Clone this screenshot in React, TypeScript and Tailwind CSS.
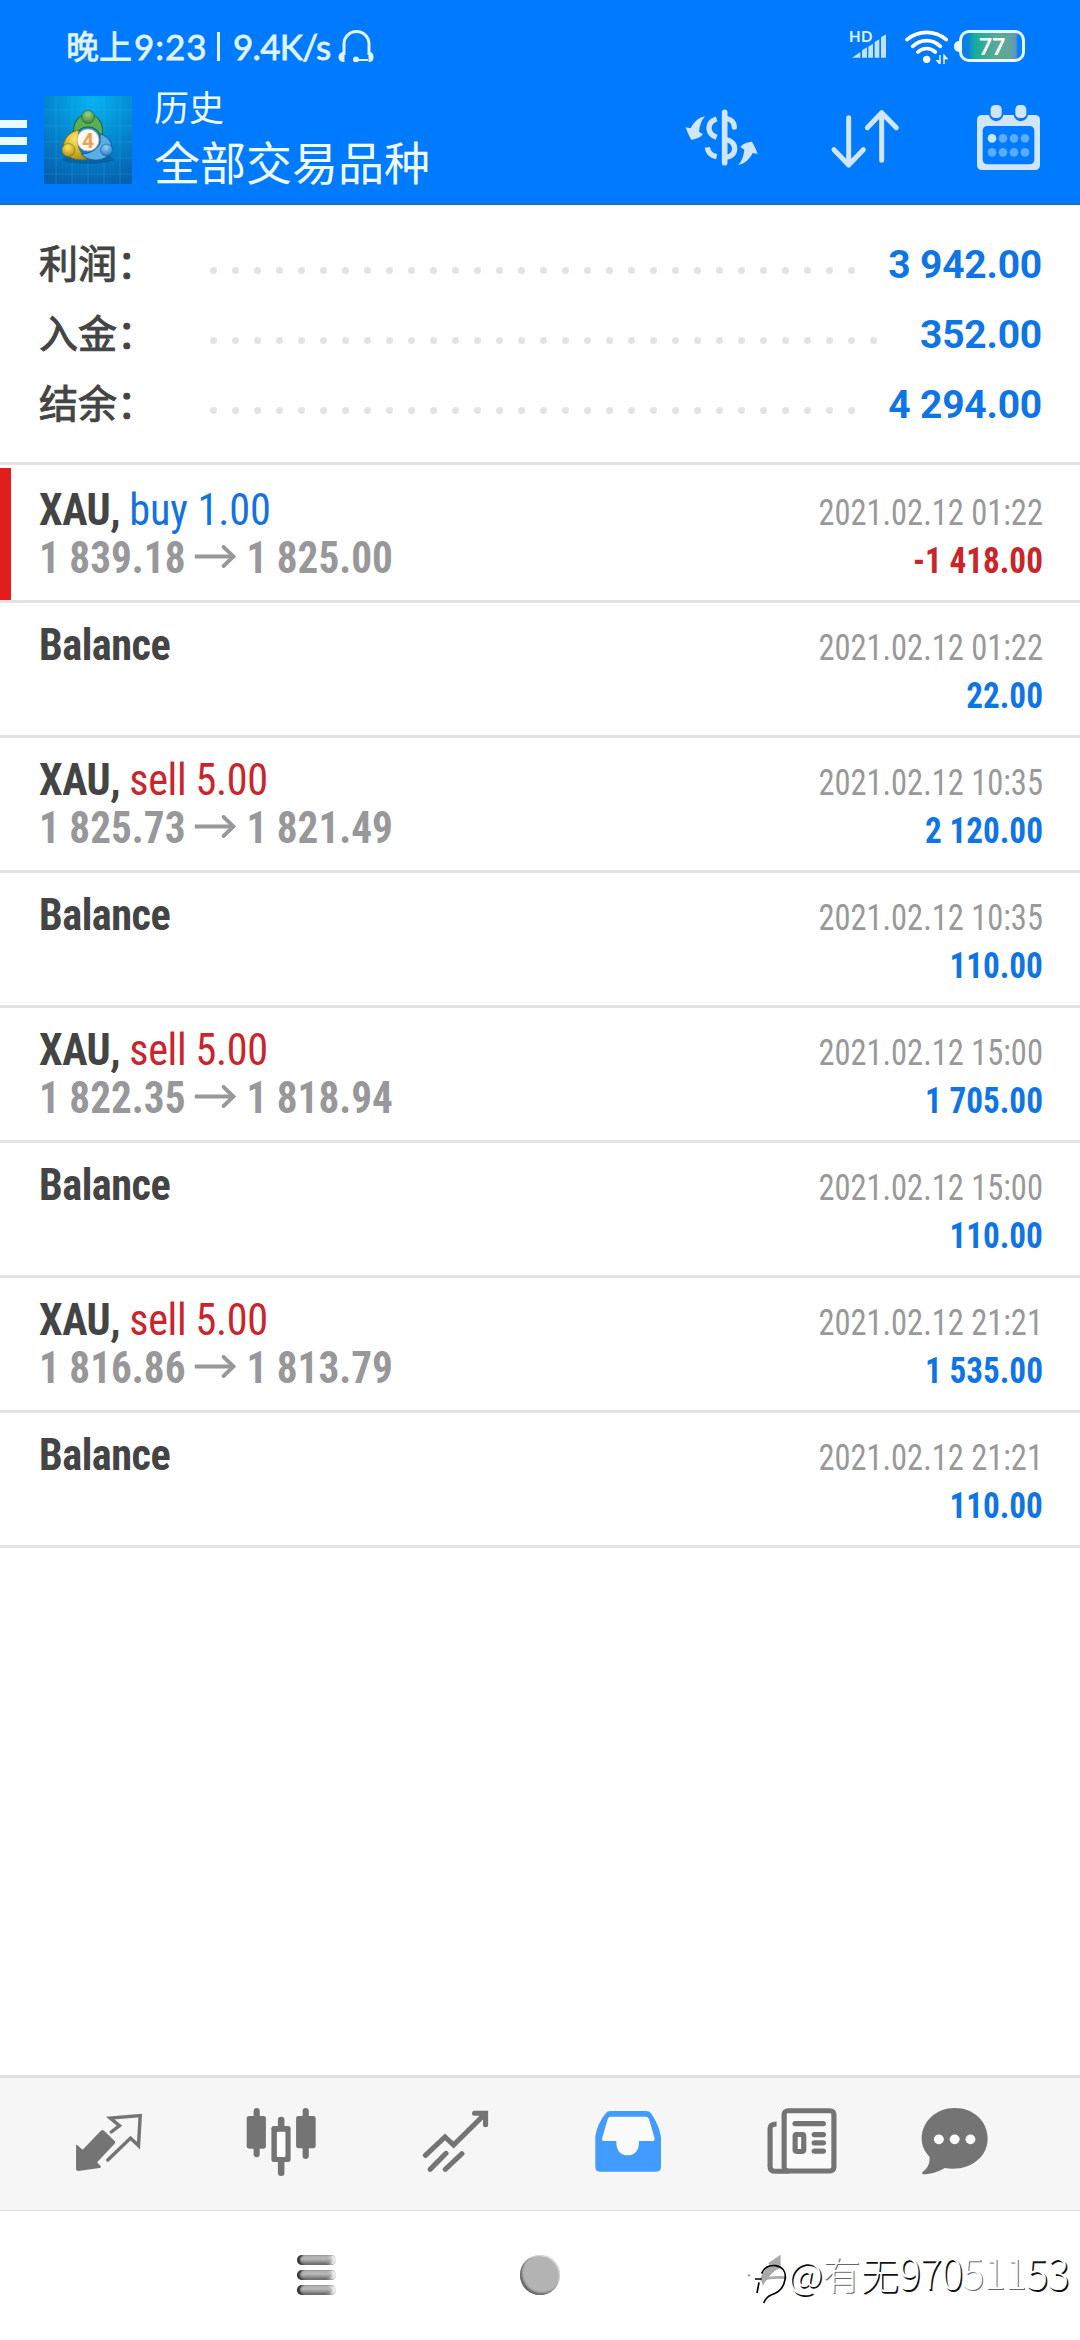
import type { ReactNode } from "react";

type Deal = {
  symbol: string;
  side?: "buy" | "sell";
  volume?: string;
  open?: string;
  close?: string;
  time: string;
  amount: string;
};

const summary = [
  { label: "利润", value: "3 942.00", dots: 30 },
  { label: "入金", value: "352.00", dots: 31 },
  { label: "结余", value: "4 294.00", dots: 30 },
];

const deals: Deal[] = [
  { symbol: "XAU", side: "buy", volume: "1.00", open: "1 839.18", close: "1 825.00", time: "2021.02.12 01:22", amount: "-1 418.00" },
  { symbol: "Balance", time: "2021.02.12 01:22", amount: "22.00" },
  { symbol: "XAU", side: "sell", volume: "5.00", open: "1 825.73", close: "1 821.49", time: "2021.02.12 10:35", amount: "2 120.00" },
  { symbol: "Balance", time: "2021.02.12 10:35", amount: "110.00" },
  { symbol: "XAU", side: "sell", volume: "5.00", open: "1 822.35", close: "1 818.94", time: "2021.02.12 15:00", amount: "1 705.00" },
  { symbol: "Balance", time: "2021.02.12 15:00", amount: "110.00" },
  { symbol: "XAU", side: "sell", volume: "5.00", open: "1 816.86", close: "1 813.79", time: "2021.02.12 21:21", amount: "1 535.00" },
  { symbol: "Balance", time: "2021.02.12 21:21", amount: "110.00" },
];

function StatusBar() {
  return (
    <div className="flex h-[90px] items-start justify-between pl-[66px] pr-[55px] pt-[30px] text-[#dff4ff]">
      <div className="flex h-8 items-center font-[Lato,'Noto_Sans_CJK_SC',sans-serif] text-[35px] leading-8 [-webkit-text-stroke:0.8px_#dff4ff]">
        <span className="w-[68px] text-[33px]">晚上</span>
        <span className="w-[83px] tracking-[1px]">9:23</span>
        <span className="h-[29px] w-[3px] bg-[#dff4ff]" />
        <span className="ml-[13px] w-[105px] tracking-[-0.7px]">9.4K/s</span>
        <svg className="h-8 w-[36px]" viewBox="0 0 36 32" fill="none" stroke="currentColor" strokeWidth="3">
          <path d="M6 25V14a12.500 12.500 0 0 1 25 0v11" />
          <path d="M18 30h12" strokeWidth="2" />
          <path d="M6.500 22v10c-4 0-6-2-6-5s2-5 6-5zM30.500 22v10c4 0 5-2 5-5s-1-5-5-5z" fill="currentColor" stroke="none" />
          <circle cx="18" cy="29.500" r="3" fill="currentColor" stroke="none" />
        </svg>
      </div>
      <div className="flex h-[34px] items-start">
        <div className="relative h-[34px] w-[56px]">
          <span className="absolute -top-px left-0 font-[Lato,sans-serif] text-[15px] font-bold leading-[15px] tracking-[0.5px]">HD</span>
          <svg className="h-[28px] w-[38px]" viewBox="0 0 114 84" fill="#bfe2ff">
            <path d="M9 83L34 66V83zM39 83V61l15-9v31zM58 83V50l14-9v42zM77 83V36l14-8v55zM96 83V22l15-9v70z" />
          </svg>
        </div>
        <svg className="h-[34px] w-[43px]" viewBox="792 88 129 102" fill="none" stroke="#fff" strokeWidth="11" strokeLinecap="round">
          <path d="M798 117C832 88 882 88 916 117M815 137C840 114 874 114 898 137M831 154C846 140 867 140 883 154" />
          <circle cx="857" cy="176" r="11" fill="#fff" stroke="none" />
          <path d="M897 163v28l-9-11h7M909 191v-27l9 10h-7" strokeWidth="4" strokeLinecap="butt" />
        </svg>
        <div className="ml-[6px] mt-1 flex h-6 items-center">
          <span className="h-[11px] w-[5px] rounded-l-full bg-[#e6faff]" />
          <span className="flex h-8 w-[66px] items-center justify-center rounded-[10px] border-[3px] border-[#e6fbff] bg-[linear-gradient(90deg,#0a7fe8_10%,#14ab9c_20%,#58a994_55%,#62a59b_80%,#5f93c4_90%,#0a7dfa_93%)] bg-clip-padding font-[Lato,sans-serif] text-[23px] font-bold text-white">
            77
          </span>
        </div>
      </div>
    </div>
  );
}

function AppLogo() {
  return (
    <svg className="h-[88px] w-[88px]" viewBox="0 0 88 88">
      <defs>
        <radialGradient id="sky" cx="0.550" cy="0.050" r="1">
          <stop offset="0" stopColor="#05b4ee" />
          <stop offset="0.500" stopColor="#0488d0" />
          <stop offset="1" stopColor="#0660ae" />
        </radialGradient>
        <radialGradient id="green" cx="0.500" cy="0.300" r="0.800">
          <stop offset="0" stopColor="#9fd67c" />
          <stop offset="1" stopColor="#247a34" />
        </radialGradient>
        <radialGradient id="gold" cx="0.450" cy="0.300" r="0.800">
          <stop offset="0" stopColor="#fbe75a" />
          <stop offset="1" stopColor="#a98414" />
        </radialGradient>
        <radialGradient id="azure" cx="0.450" cy="0.300" r="0.800">
          <stop offset="0" stopColor="#8fd4fa" />
          <stop offset="1" stopColor="#1a6bb4" />
        </radialGradient>
      </defs>
      <rect width="88" height="88" fill="url(#sky)" />
      <path d="M12 0v88M28 0v88M44 0v88M60 0v88M76 0v88M0 14h88M0 30h88M0 46h88M0 62h88M0 78h88" stroke="#3fb4ee" strokeOpacity="0.250" />
      <ellipse cx="44" cy="63" rx="26" ry="5" fill="#04407c" opacity="0.400" />
      <path d="M31 43C26 30 34 18 44 18C54 18 62 30 57 43C56 35 51 31 44 31C37 31 32 35 31 43Z" fill="#5cae50" stroke="#17603a" />
      <path d="M35 34C23 36 17 47 20 56C26 64 36 65 45 63C39 60 35 55 34 48Z" fill="url(#gold)" stroke="#6e6a16" />
      <path d="M56 38C65 40 70 49 67 56C61 66 46 67 37 58C45 58 53 54 56 47Z" fill="#5aaee6" stroke="#155a96" />
      <circle cx="44" cy="21" r="6.500" fill="url(#green)" stroke="#17603a" strokeWidth="0.600" />
      <circle cx="24.500" cy="54" r="6.500" fill="url(#gold)" stroke="#8a7414" strokeWidth="0.600" />
      <circle cx="62.500" cy="54" r="6" fill="url(#azure)" stroke="#155a96" strokeWidth="0.600" />
      <circle cx="44" cy="44" r="11" fill="#fdf8f1" stroke="#b9a58a" strokeWidth="0.800" />
      <text x="44" y="51.500" textAnchor="middle" fill="#f0a050" fontFamily="Roboto, sans-serif" fontSize="21" fontWeight="700">4</text>
    </svg>
  );
}

function TitleBar() {
  return (
    <div className="flex h-[113px] items-start">
      <div className="mt-[30px] flex w-[27px] flex-col gap-[9px]">
        <span className="h-2 bg-[#e8fbff]" />
        <span className="h-2 bg-[#e8fbff]" />
        <span className="h-2 bg-[#e8fbff]" />
      </div>
      <div className="ml-[17px] mt-[6px]">
        <AppLogo />
      </div>
      <div className="-mt-[2px] ml-[22px] flex flex-1 flex-col font-['Noto_Sans_CJK_SC',sans-serif] text-[#eefcff]">
        <span className="text-[35px] leading-9">历史</span>
        <span className="mt-[9px] text-[46px] leading-[54px]">全部交易品种</span>
      </div>
      <svg className="mt-[17px] h-[60px] w-[77px]" viewBox="130 320 231 180" fill="none" stroke="#cfe6fd" strokeWidth="16">
        <path d="M255 336V487" strokeWidth="17" strokeLinecap="round" />
        <path d="M260 355C276 357 284 367 284 380" strokeLinecap="round" />
        <path d="M257 417C275 420 285 431 285 445C285 460 274 470 257 471" />
        <path d="M231 356C214 361 208 372 208 384C208 396 216 406 231 411" />
        <path d="M203 441C205 456 216 466 231 469" />
        <path d="M138 381L153 384C162 366 176 352 196 348C184 362 180 378 178 394L190 402C180 414 166 417 155 418C147 405 142 393 138 381Z" fill="#cfe6fd" stroke="none" />
        <path d="M138 381L153 384C162 366 176 352 196 348C184 362 180 378 178 394L190 402C180 414 166 417 155 418C147 405 142 393 138 381Z" fill="#cfe6fd" stroke="none" transform="rotate(180 246 421)" />
      </svg>
      <svg className="ml-[70px] mt-[17px] h-[64px] w-[70px]" viewBox="570 320 210 192" fill="none" stroke="#cfe6fd" strokeWidth="15" strokeLinecap="round" strokeLinejoin="round">
        <path d="M626 352V494M582 448L626 494L670 448M725 480V337M682 382L725 337L769 382" />
      </svg>
      <svg className="ml-[77px] mr-10 mt-[15px] h-[66px] w-[63px]" viewBox="1011 315 189 198">
        <path d="M1025 345H1186A14 14 0 0 1 1200 359V496A14 14 0 0 1 1186 510H1025A14 14 0 0 1 1011 496V359A14 14 0 0 1 1025 345ZM1042 378A14 14 0 0 0 1028 392V479A14 14 0 0 0 1042 493H1169A14 14 0 0 0 1183 479V392A14 14 0 0 0 1169 378Z" fill="#cfe6fd" fillRule="evenodd" />
        <path d="M1047 340H1090V342A21 21 0 0 1 1047 342ZM1121 340H1164V342A21 21 0 0 1 1121 342Z" fill="#007aff" />
        <rect x="1052" y="315" width="33" height="39" rx="13" fill="#cfe6fd" />
        <rect x="1126" y="315" width="33" height="39" rx="13" fill="#cfe6fd" />
        <circle cx="1056" cy="415" r="13" fill="#c9e7ff" />
        <g fill="#5aadff">
          <circle cx="1089" cy="415" r="13" />
          <circle cx="1122" cy="415" r="13" />
          <circle cx="1155" cy="415" r="13" />
          <circle cx="1056" cy="457" r="13" />
          <circle cx="1089" cy="457" r="13" />
          <circle cx="1122" cy="457" r="13" />
          <circle cx="1155" cy="457" r="13" />
        </g>
      </svg>
    </div>
  );
}

function Summary() {
  return (
    <section className="h-[260px] border-b-[3px] border-[#e3e3e3] pl-[39px] pr-[38px] pt-6">
      {summary.map((row) => (
        <div key={row.label} className="flex h-[70px] items-center">
          <span className="-mt-[5px] w-[171px] font-['Noto_Sans_CJK_SC',sans-serif] text-[39px] leading-[65px] text-[#444] [-webkit-text-stroke:1px_#444]">
            {row.label}：
          </span>
          <span className="mt-[13px] flex gap-[15px]">
            {Array.from({ length: row.dots }, (_, i) => (
              <span key={i} className="size-[7px] rounded-full bg-[#e3e3e3]" />
            ))}
          </span>
          <span className="ml-auto mt-[3px] font-[Roboto,sans-serif] text-[39px] font-bold tracking-[-0.2px] text-[#0f75e4]">{row.value}</span>
        </div>
      ))}
    </section>
  );
}

function DealRow({ deal }: { deal: Deal }) {
  const loss = deal.amount.startsWith("-");
  return (
    <li className="relative flex h-[135px] justify-between border-b-[3px] border-[#e3e3e3] pl-[39px] pr-[37px] font-['Roboto_Condensed',Roboto,sans-serif] leading-[48px] [font-stretch:75%]">
      {loss && <span className="absolute left-0 top-0 h-[132px] w-[11px] bg-[#e01e1e]" />}
      <div className="pt-[18px] text-[44px] font-bold text-[#444]">
        <p className="origin-left scale-x-[0.96] tracking-[-0.5px]">
          {deal.symbol}
          {deal.side && (
            <>
              ,{" "}
              <span className={deal.side === "buy" ? "font-normal tracking-[-0.1px] text-[#1273de]" : "font-normal tracking-[-0.4px] text-[#c9252b]"}>
                {deal.side} {deal.volume}
              </span>
            </>
          )}
        </p>
        {deal.open && (
          <p className="flex origin-left scale-x-[0.937] items-center text-[#98989a]">
            {deal.open}
            <svg className="mx-[10px] mb-1 h-[23px] w-[45px]" viewBox="0 0 45 23" fill="none" stroke="currentColor" strokeWidth="4">
              <path d="M0 11.500H41" />
              <path d="M31 2L41.500 11.500L31 21" strokeLinecap="round" />
            </svg>
            {deal.close}
          </p>
        )}
      </div>
      <div className="pt-[21px] text-right text-[36px]">
        <p className="origin-right scale-x-[0.902] text-[#999]">{deal.time}</p>
        <p className={loss ? "origin-right scale-x-[0.922] font-bold text-[#c9252b]" : "origin-right scale-x-[0.922] font-bold text-[#0f75e4]"}>
          {deal.amount}
        </p>
      </div>
    </li>
  );
}

function Tab({ children }: { children: ReactNode }) {
  return <button className="flex h-full w-[70px] items-start justify-center pt-[30px]">{children}</button>;
}

function TabBar() {
  return (
    <nav className="flex h-[136px] items-start border-b border-t-[3px] border-[#e0e0e0] bg-[#f6f6f6] pl-[74px] text-[#747474]">
      <Tab>
        <svg className="mt-[3px] h-[62px] w-[70px] shrink-0" viewBox="214 153 203 186" preserveAspectRatio="none" fill="none" stroke="currentColor" strokeWidth="10">
          <path d="M220 256Q219 252 224 256L239 269L292 212Q297 208 301 212L332 243Q336 248 331 252L281 307L291 318Q295 322 288 324L226 333Q220 333 220 327Z" fill="currentColor" stroke="none" />
          <path d="M322 216L346 197L319 174L406 167L401 257L378 234L312 300" strokeLinejoin="miter" strokeLinecap="round" />
        </svg>
      </Tab>
      <span className="w-[102px]" />
      <Tab>
        <svg className="h-[68px] w-[70px] shrink-0" viewBox="714 144 204 204" preserveAspectRatio="none" fill="currentColor">
          <rect x="736" y="144" width="18" height="148" rx="9" />
          <rect x="716" y="168" width="56" height="98" rx="7" />
          <rect x="879" y="144" width="18" height="153" rx="9" />
          <rect x="860" y="168" width="57" height="97" rx="7" />
          <rect x="807" y="170" width="19" height="178" rx="9" />
          <rect x="788" y="198" width="56" height="108" rx="7" />
          <rect x="804" y="215" width="25" height="76" rx="3" fill="#fff" />
        </svg>
      </Tab>
      <span className="w-[104px]" />
      <Tab>
        <svg className="mt-[2px] h-[62px] w-[67px] shrink-0" viewBox="1221 150 195 186" preserveAspectRatio="none" fill="none" stroke="currentColor" strokeWidth="15" strokeLinecap="round">
          <path d="M1231 286L1288 231L1313 255L1402 164M1374 160H1406V194M1245 328L1291 280M1289 328L1337 281" />
        </svg>
      </Tab>
      <span className="w-[103px]" />
      <Tab>
        <svg className="mt-[3px] h-[61px] w-[66px] shrink-0" viewBox="158 152 192 183" preserveAspectRatio="none">
          <path d="M190 158Q194 152 202 152H308Q317 152 322 160Q345 196 350 230V320Q350 334 336 334H172Q159 334 159 320V228Q164 190 190 158Z" fill="#429bff" />
          <path d="M203 169H305Q312 169 315 176L331 232Q333 242 324 242H286C287 272 272 285 253 285C234 285 219 272 220 242H184Q176 242 179 233L195 176Q198 169 203 169Z" fill="#fbfbfb" />
        </svg>
      </Tab>
      <span className="w-[104px]" />
      <Tab>
        <svg className="h-[66px] w-[70px] shrink-0" viewBox="656 143 204 199" preserveAspectRatio="none" fill="none" stroke="currentColor" strokeWidth="15">
          <rect x="706" y="151" width="145" height="182" rx="11" fill="#fafafa" />
          <path d="M684 191Q665 191 665 204V320Q665 334 681 334H720" />
          <path d="M738 190H820M794 223H820M794 248H820M794 273H820" strokeLinecap="round" strokeWidth="16" />
          <rect x="738" y="223" width="25" height="51" rx="4" fill="#fff" />
        </svg>
      </Tab>
      <span className="w-[82px]" />
      <Tab>
        <svg className="h-[67px] w-[67px] shrink-0" viewBox="1101 143 195 201" preserveAspectRatio="none" fill="currentColor">
          <path d="M1199 143C1254 143 1295 183 1295 235C1295 292 1240 335 1170 323C1154 334 1130 342 1108 342Q1101 341 1106 335C1122 322 1127 308 1126 290C1110 272 1103 254 1103 235C1103 183 1146 143 1199 143Z" />
          <g fill="#fff">
            <circle cx="1153" cy="237" r="14.500" />
            <circle cx="1199" cy="237" r="14.500" />
            <circle cx="1245" cy="237" r="14.500" />
          </g>
        </svg>
      </Tab>
    </nav>
  );
}

function SystemNav() {
  const bar =
    "h-[10px] w-[39px] rounded-full bg-[linear-gradient(180deg,#a9a9a9,#b8b8b8_40%,#8f8f8f_70%,#3e3e3e)] shadow-[inset_3px_0_2px_#333,inset_-4px_0_3px_#eee]";
  const faint = "[text-shadow:1px_1px_0_#666]";
  return (
    <footer className="flex h-[129px] items-start pl-[297px] pt-[44px]">
      <div className="flex flex-col gap-[5px]">
        <span className={bar} />
        <span className={bar} />
        <span className={bar} />
      </div>
      <span className="ml-[184px] size-10 rounded-full bg-[#b3b3b3] shadow-[inset_2px_-2px_2px_#666,inset_-1px_1px_1px_#ddd]" />
      <svg className="-mt-[2px] ml-[187px] h-[52px] w-[42px]" viewBox="20 36 126 156" preserveAspectRatio="none" fill="none">
        <path d="M121 41V80C100 88 82 108 68 134L60 112C66 96 76 84 88 72L84 66Z" fill="#aaa" />
        <path d="M60 116C90 108 112 108 138 110" stroke="#aaa" strokeWidth="8" />
        <path d="M64 98C72 78 90 72 106 74C128 78 138 94 134 116C130 142 112 156 92 162Q78 168 70 186M44 114H64M56 124C54 136 52 146 50 156" stroke="#000" strokeWidth="5" />
        <circle cx="26" cy="103" r="4" fill="#aaa" />
      </svg>
      <span className="-ml-px -mt-[10px] whitespace-nowrap font-['Noto_Sans_CJK_SC',sans-serif] text-[38px] font-light leading-[52px] text-white [text-shadow:1.5px_1.5px_0_#111]">
        @<span className={faint}>有</span>无
        <span className="text-[41px] tracking-[-0.7px]">
          970<span className={faint}>511</span>53
        </span>
      </span>
    </footer>
  );
}

export default function App() {
  return (
    <div className="flex h-[2340px] w-[1080px] flex-col overflow-hidden bg-white">
      <header className="h-[205px] border-b-2 border-[#1670c8] bg-[#007aff]">
        <StatusBar />
        <TitleBar />
      </header>
      <Summary />
      <ul className="mt-[3px] flex-1">
        {deals.map((deal, i) => (
          <DealRow key={i} deal={deal} />
        ))}
      </ul>
      <TabBar />
      <SystemNav />
    </div>
  );
}
